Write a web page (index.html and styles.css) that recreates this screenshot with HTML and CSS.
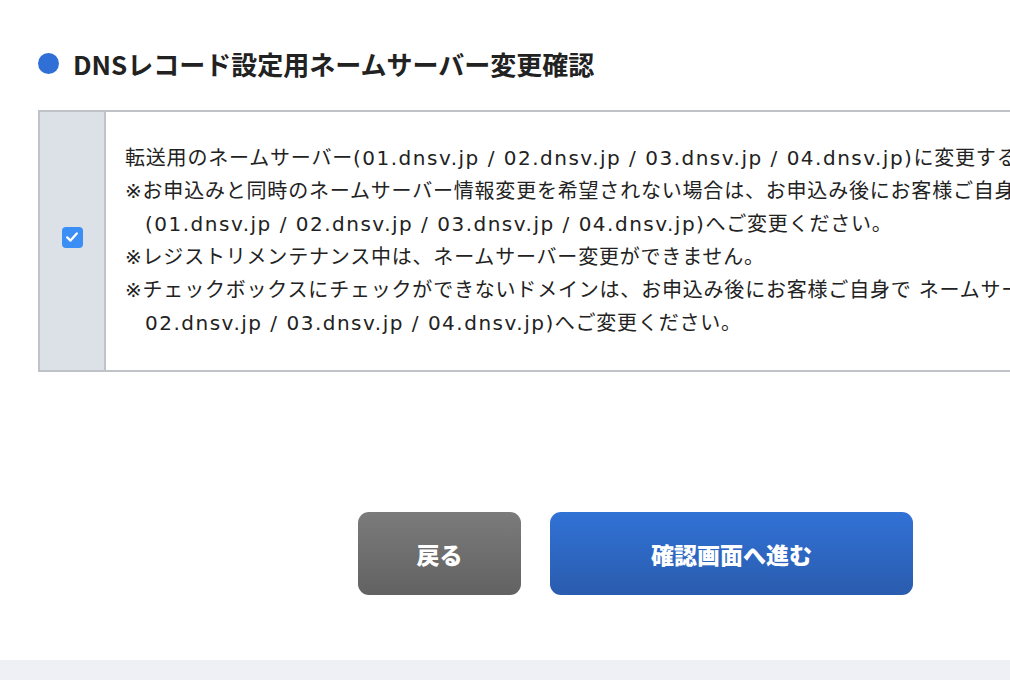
FILE: index.html
```html
<!DOCTYPE html>
<html lang="ja">
<head>
  <meta charset="UTF-8" />
  <title>ネームサーバー変更確認</title>
  <link rel="stylesheet" href="styles.css">
</head>
<body>
  <div class="page">
    <h2 class="section-title"><span class="dot"></span>DNSレコード設定用ネームサーバー変更確認</h2>

    <div class="ns-table">
      <div class="ns-check">
        <span class="check">
          <svg width="16" height="16" viewBox="0 0 16 16"><path d="M3.2 8.4 L6.5 11.6 L12.8 4.4" fill="none" stroke="#fff" stroke-width="2.3" stroke-linecap="round" stroke-linejoin="round"/></svg>
        </span>
      </div>
      <div class="ns-text">
        <p>転送用のネームサーバー<span class="host">(01.dnsv.jp / 02.dnsv.jp / 03.dnsv.jp / 04.dnsv.jp)</span>に変更する</p>
        <p class="note">※お申込みと同時のネームサーバー情報変更を希望されない場合は、お申込み後にお客様ご自身でネームサーバー<br><span class="host">(01.dnsv.jp / 02.dnsv.jp / 03.dnsv.jp / 04.dnsv.jp)</span>へご変更ください。</p>
        <p class="note">※レジストリメンテナンス中は、ネームサーバー変更ができません。</p>
        <p class="note">※チェックボックスにチェックができないドメインは、お申込み後にお客様ご自身で ネームサーバー<span class="host">(01.dnsv.jp /<br>02.dnsv.jp / 03.dnsv.jp / 04.dnsv.jp)</span>へご変更ください。</p>
      </div>
    </div>

    <div class="actions">
      <button class="btn btn-back">戻る</button>
      <button class="btn btn-next">確認画面へ進む</button>
    </div>
  </div>
  <div class="footer"></div>
</body>
</html>
```

FILE: styles.css
```css
* {
  box-sizing: border-box;
}

html, body {
  margin: 0;
  overflow: hidden;
}

body {
  font-family: "Noto Sans CJK JP", "Noto Sans", sans-serif;
  color: #222;
  background-color: #fff;
  width: 1010px;
  height: 680px;
}

.page {
  width: 1200px;
  padding: 40px 0 0 38px;
  height: 660px;
}

.section-title {
  display: flex;
  align-items: center;
  margin: 0;
  height: 46px;
  font-size: 26px;
  font-weight: 700;
  color: #222;
}

.dot {
  width: 21px;
  height: 21px;
  border-radius: 50%;
  background-color: #2f6fd6;
  margin-right: 14px;
}

.ns-table {
  display: flex;
  margin-top: 24px;
  border: 2px solid #bfc2c7;
  border-right: none;
  height: 262px;
}

.ns-check {
  flex-shrink: 0;
  width: 66px;
  background-color: #dce0e7;
  border-right: 2px solid #bfc2c7;
  display: flex;
  align-items: center;
  justify-content: center;
}

.check {
  width: 21px;
  height: 21px;
  margin-bottom: 8px;
  border-radius: 4px;
  background-color: #3a8ef5;
  display: flex;
  align-items: center;
  justify-content: center;
}

.ns-text {
  flex: 1;
  padding: 30px 0 0 19px;
  font-family: "DejaVu Sans", "Noto Sans CJK JP", sans-serif;
  font-size: 20px;
  letter-spacing: 0.8px;
  line-height: 33px;
  white-space: nowrap;
}

.ns-text p {
  margin: 0;
}

.ns-text .host {
  letter-spacing: 1.5px;
}

.note {
  padding-left: 20px;
  text-indent: -20px;
}

.actions {
  display: flex;
  gap: 29px;
  margin: 140px 0 0 320px;
}

.btn {
  height: 83px;
  border: none;
  border-radius: 11px;
  color: #fff;
  font-family: inherit;
  font-size: 23px;
  font-weight: 900;
  cursor: pointer;
}

.btn-back {
  width: 163px;
  background: linear-gradient(#7b7b7b, #626262);
}

.btn-next {
  width: 363px;
  background: linear-gradient(#3172d6, #2a5cae);
}

.footer {
  height: 20px;
  background-color: #eef0f5;
}
```
